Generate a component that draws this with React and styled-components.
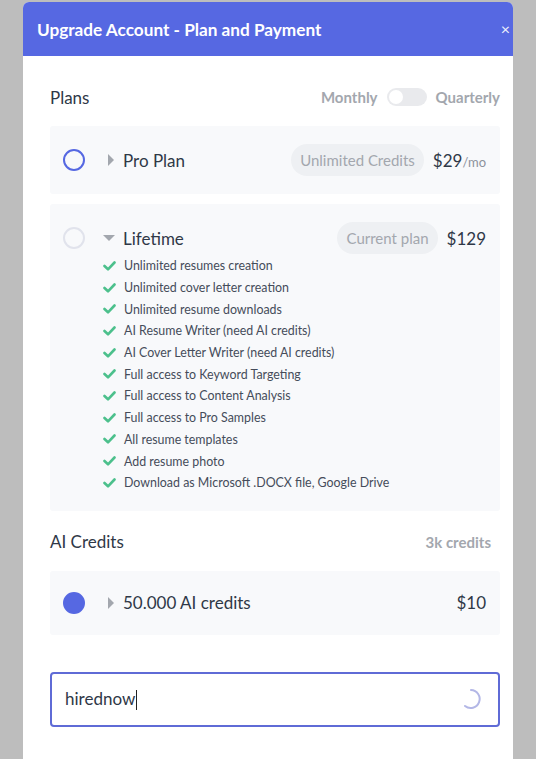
import React from 'react';
import styled, { createGlobalStyle } from 'styled-components';

const GlobalStyle = createGlobalStyle`
  html, body {
    margin: 0;
    padding: 0;
    background: #bdbdbd;
    overflow: hidden;
  }
  body {
    font-family: Lato, "Noto Sans", sans-serif;
  }
`;

const Page = styled.div`
  height: 759px;
  padding: 2px 23px 0 23px;
  box-sizing: border-box;
`;

const Modal = styled.div`
  width: 490px;
  height: 757px;
  background: #fff;
  border-radius: 6px 6px 0 0;
  overflow: hidden;
`;

const Header = styled.div`
  height: 54px;
  background: #5668e2;
  display: flex;
  align-items: center;
  justify-content: space-between;
  padding: 0 3px 0 14px;
  color: #fff;
`;

const Title = styled.h1`
  margin: 0;
  font-size: 17.2px;
  font-weight: 700;
`;

const Close = styled.span`
  font-size: 16px;
  line-height: 1;
  opacity: 0.9;
`;

const Body = styled.div`
  padding: 28px 13px 0 27px;
`;

const SectionHead = styled.div`
  display: flex;
  align-items: center;
  justify-content: space-between;
  height: 26px;
  margin-bottom: ${p => p.$gap || 16}px;
  padding-right: ${p => p.$pr || 0}px;
`;

const SectionTitle = styled.h2`
  margin: 0;
  font-size: 17px;
  font-weight: 400;
  color: #2f3847;
`;

const Muted = styled.span`
  font-size: 15px;
  font-weight: 700;
  color: #a3a7ae;
`;

const Toggle = styled.div`
  display: flex;
  align-items: center;
  gap: 9px;
`;

const Switch = styled.span`
  width: 40px;
  height: 18px;
  border-radius: 9px;
  background: #e9eaed;
  display: flex;
  align-items: center;
  padding: 0 2px;
  box-sizing: border-box;
  &::before {
    content: '';
    width: 14px;
    height: 14px;
    border-radius: 50%;
    background: #fff;
  }
`;

const Card = styled.div`
  background: #f8f9fb;
  border-radius: 3px;
  padding: 0 14px 0 13px;
  margin-bottom: ${p => p.$mb ?? 10}px;
`;

const Row = styled.div`
  display: flex;
  align-items: center;
  height: ${p => p.$h || 68}px;
`;

const Radio = styled.span`
  width: 22px;
  height: 22px;
  border-radius: 50%;
  box-sizing: border-box;
  border: 2px solid ${p => (p.$state === 'off' ? '#e1e3ec' : '#5668e2')};
  background: ${p => (p.$state === 'on' ? '#5668e2' : 'transparent')};
  flex-shrink: 0;
  margin-right: 20px;
`;

const Caret = styled.span`
  width: 0;
  height: 0;
  flex-shrink: 0;
  ${p =>
    p.$open
      ? `border-left: 6px solid transparent; border-right: 6px solid transparent; border-top: 6px solid #a3a7ae; margin-left: -2px; margin-right: 8px;`
      : `border-top: 6px solid transparent; border-bottom: 6px solid transparent; border-left: 6px solid #a3a7ae; margin-left: 3px; margin-right: 9px;`}
`;

const Name = styled.span`
  font-size: 17px;
  color: #2f3847;
  flex: 1;
`;

const Badge = styled.span`
  background: #eef0f3;
  color: #a3a7ae;
  font-size: 15px;
  border-radius: 17px;
  padding: 7px 9px;
  margin-right: 9px;
`;

const Price = styled.span`
  font-size: 17px;
  color: #2f3847;
  small {
    font-size: 13px;
    color: #8d929b;
  }
`;

const Features = styled.ul`
  list-style: none;
  margin: -17px 0 0 0;
  padding: 0 0 17px 40px;
`;

const Feature = styled.li`
  display: flex;
  align-items: center;
  height: 21.7px;
  font-size: 12.4px;
  color: #454c5a;
  svg {
    margin-right: 8px;
  }
`;

const Input = styled.div`
  margin-top: 37px;
  height: 55px;
  border: 2px solid #5f6bd6;
  border-radius: 4px;
  box-sizing: border-box;
  display: flex;
  align-items: center;
  justify-content: space-between;
  padding: 0 16px 0 13px;
  font-size: 17px;
  color: #2f3847;
`;

const Cursor = styled.span`
  display: inline-block;
  width: 1px;
  height: 20px;
  background: #222;
  vertical-align: middle;
  margin-left: 1px;
`;

const Check = () => (
  <svg width="13" height="10" viewBox="0 0 13 10">
    <path d="M1.5 5 L5 8.3 L11.5 1.5" fill="none" stroke="#4cc08c" strokeWidth="2.6" strokeLinecap="round" strokeLinejoin="round" />
  </svg>
);

const Spinner = () => (
  <svg width="22" height="22" viewBox="0 0 22 22">
    <path d="M11 2 A9 9 0 1 1 5 18" fill="none" stroke="#b3b7e6" strokeWidth="2" strokeLinecap="round" />
  </svg>
);

const features = [
  'Unlimited resumes creation',
  'Unlimited cover letter creation',
  'Unlimited resume downloads',
  'AI Resume Writer (need AI credits)',
  'AI Cover Letter Writer (need AI credits)',
  'Full access to Keyword Targeting',
  'Full access to Content Analysis',
  'Full access to Pro Samples',
  'All resume templates',
  'Add resume photo',
  'Download as Microsoft .DOCX file, Google Drive',
];

export default function App() {
  return (
    <Page>
      <GlobalStyle />
      <Modal>
        <Header>
          <Title>Upgrade Account - Plan and Payment</Title>
          <Close>×</Close>
        </Header>
        <Body>
          <SectionHead>
            <SectionTitle>Plans</SectionTitle>
            <Toggle>
              <Muted>Monthly</Muted>
              <Switch />
              <Muted>Quarterly</Muted>
            </Toggle>
          </SectionHead>

          <Card>
            <Row>
              <Radio $state="ring" />
              <Caret />
              <Name>Pro Plan</Name>
              <Badge>Unlimited Credits</Badge>
              <Price>$29<small>/mo</small></Price>
            </Row>
          </Card>

          <Card $mb={18}>
            <Row>
              <Radio $state="off" />
              <Caret $open />
              <Name>Lifetime</Name>
              <Badge>Current plan</Badge>
              <Price>$129</Price>
            </Row>
            <Features>
              {features.map(f => (
                <Feature key={f}>
                  <Check />
                  {f}
                </Feature>
              ))}
            </Features>
          </Card>

          <SectionHead $gap={16} $pr={9}>
            <SectionTitle>AI Credits</SectionTitle>
            <Muted>3k credits</Muted>
          </SectionHead>

          <Card $mb={0}>
            <Row $h={64}>
              <Radio $state="on" />
              <Caret />
              <Name>50.000 AI credits</Name>
              <Price>$10</Price>
            </Row>
          </Card>

          <Input>
            <span>hirednow<Cursor /></span>
            <Spinner />
          </Input>
        </Body>
      </Modal>
    </Page>
  );
}
